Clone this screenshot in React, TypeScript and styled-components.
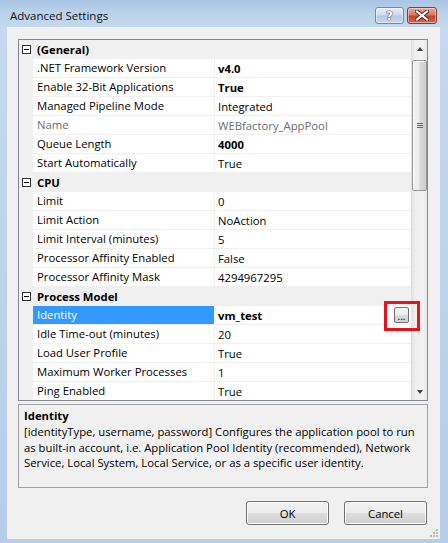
import React from "react";
import styled, { createGlobalStyle } from "styled-components";

const GlobalStyle = createGlobalStyle`
  html, body { margin: 0; padding: 0; }
  body {
    font-family: "Open Sans", "Noto Sans", sans-serif;
    font-size: 11.3px;
    color: #000;
  }
  * { box-sizing: border-box; }
`;

const Window = styled.div`
  width: 448px;
  height: 543px;
  display: flex;
  flex-direction: column;
  padding: 0 8px 4px 7px;
  background: linear-gradient(180deg, #a9c4e4 0px, #bad1eb 12px, #c4d9ef 27px, #bcd2eb 60%, #b6cde8 100%);
`;

const TitleBar = styled.div`
  height: 27px;
  flex: none;
  display: flex;
  align-items: flex-start;
  padding-left: 3px;
`;

const TitleText = styled.div`
  font-size: 11.5px;
  line-height: 16px;
  margin-top: 8px;
  color: #111;
`;

const Controls = styled.div`
  margin-left: auto;
  margin-right: 3px;
  margin-top: 7px;
  display: flex;
  gap: 3px;
`;

const CaptionButton = styled.div<{ $close?: boolean }>`
  width: ${(p) => (p.$close ? 30 : 29)}px;
  height: 17px;
  border-radius: 3px;
  border: 1px solid ${(p) => (p.$close ? "#8b3b2e" : "#6f89ad")};
  background: ${(p) =>
    p.$close
      ? "linear-gradient(180deg, #e9a897 0%, #d97966 45%, #c4432c 55%, #d06650 100%)"
      : "linear-gradient(180deg, #e6eef8 0%, #ccdcef 45%, #b4c9e4 55%, #c6d8ee 100%)"};
  box-shadow: inset 0 0 0 1px rgba(255, 255, 255, 0.45);
  display: flex;
  align-items: center;
  justify-content: center;
`;

const HelpGlyph = styled.span`
  font-family: "DejaVu Sans", sans-serif;
  font-weight: bold;
  font-size: 12px;
  line-height: 14px;
  color: #fff;
  text-shadow: 0 0 1px #2b4d7a, 0 0 1px #2b4d7a, 0 0 1px #2b4d7a;
`;

const Client = styled.div`
  flex: 1;
  position: relative;
  background: #f0f0f0;
  display: flex;
  flex-direction: column;
  padding: 12px 12px 0 11px;
`;

const Grid = styled.div`
  height: 362px;
  flex: none;
  border: 1px solid #828790;
  background: #fff;
  display: flex;
  overflow: hidden;
`;

const RowsArea = styled.div`
  width: 392px;
  flex: none;
  overflow: hidden;
  display: flex;
  flex-direction: column;
`;

const Row = styled.div`
  height: 19px;
  flex: none;
  display: flex;
  background: #f0f0f0;
`;

const Gutter = styled.div`
  width: 14px;
  flex: none;
  display: flex;
  align-items: center;
  justify-content: center;
`;

const Expander = styled.span`
  width: 9px;
  height: 9px;
  border: 1px solid #303030;
  background: #fff;
  display: flex;
  align-items: center;
  justify-content: center;
  &::after {
    content: "";
    width: 5px;
    height: 1px;
    background: #000;
  }
`;

const CategoryLabel = styled.div`
  font-weight: bold;
  padding-left: 4px;
  line-height: 19px;
`;

const NameCell = styled.div<{ $selected?: boolean; $disabled?: boolean }>`
  width: 182px;
  flex: none;
  padding-left: 4px;
  line-height: 18px;
  white-space: nowrap;
  background: ${(p) => (p.$selected ? "#3399ff" : "#fff")};
  color: ${(p) => (p.$selected ? "#fff" : p.$disabled ? "#6d6d6d" : "#000")};
  border-right: 1px solid #f0f0f0;
  border-bottom: 1px solid #f0f0f0;
`;

const ValueCell = styled.div<{ $bold?: boolean; $disabled?: boolean }>`
  flex: 1;
  display: flex;
  align-items: center;
  padding-left: 3px;
  padding-right: 2px;
  background: #fff;
  border-bottom: 1px solid #f0f0f0;
  white-space: nowrap;
  font-weight: ${(p) => (p.$bold ? "bold" : "normal")};
  color: ${(p) => (p.$disabled ? "#6d6d6d" : "#000")};
`;

const EllipsisButton = styled.div`
  margin-left: auto;
  width: 15px;
  height: 16px;
  border: 1px solid #707070;
  border-radius: 2px;
  background: linear-gradient(180deg, #f4f4f4 0%, #ececec 50%, #dedede 50%, #d2d2d2 100%);
  font-weight: normal;
  font-size: 10px;
  line-height: 16px;
  text-align: center;
  color: #000;
`;

const Annotation = styled.div`
  position: absolute;
  left: 377px;
  top: 274px;
  width: 36px;
  height: 30px;
  border: 3px solid #e3141b;
  pointer-events: none;
`;

const Scrollbar = styled.div`
  width: 16px;
  flex: none;
  border-left: 1px solid #e0e0e0;
  background: linear-gradient(90deg, #e4e4e4 0%, #f0f0f0 25%, #f2f2f2 75%, #e6e6e6 100%);
  display: flex;
  flex-direction: column;
`;

const ArrowBox = styled.div`
  height: 17px;
  flex: none;
  display: flex;
  align-items: center;
  justify-content: center;
`;

const Arrow = styled.span<{ $down?: boolean }>`
  width: 0;
  height: 0;
  border-left: 3.5px solid transparent;
  border-right: 3.5px solid transparent;
  ${(p) =>
    p.$down ? "border-top: 4px solid #444;" : "border-bottom: 4px solid #444;"}
`;

const Track = styled.div`
  flex: 1;
  padding-top: 3px;
`;

const Thumb = styled.div`
  height: 131px;
  border: 1px solid #979797;
  border-radius: 2px;
  background: linear-gradient(90deg, #f2f2f2 0%, #ebebeb 45%, #d9d9d9 55%, #cfcfcf 100%);
  box-shadow: inset 1px 1px 0 #fdfdfd;
  display: flex;
  align-items: center;
  justify-content: center;
`;

const Grip = styled.span`
  width: 6px;
  height: 5px;
  background: repeating-linear-gradient(180deg, #666 0px, #666 1px, transparent 1px, transparent 2px);
`;

const Description = styled.div`
  margin-top: 3px;
  height: 84px;
  flex: none;
  border: 1px solid #a0a0a0;
  background: #f0f0f0;
  padding: 2px 5px;
`;

const DescTitle = styled.div`
  font-weight: bold;
  line-height: 17px;
`;

const DescText = styled.div`
  line-height: 15.5px;
`;

const ButtonRow = styled.div`
  margin-top: 13px;
  display: flex;
  justify-content: flex-end;
  gap: 15px;
  padding-right: 1px;
`;

const DialogButton = styled.button`
  width: 83px;
  height: 24px;
  border: 1px solid #707070;
  border-radius: 3px;
  background: linear-gradient(180deg, #f2f2f2 0%, #ebebeb 50%, #dddddd 50%, #cfcfcf 100%);
  box-shadow: inset 0 0 0 1px #fcfcfc;
  font-family: "Open Sans", "Noto Sans", sans-serif;
  font-size: 11.3px;
  color: #000;
  padding: 0;
`;

const ResizeGrip = styled.svg`
  position: absolute;
  right: 1px;
  bottom: 1px;
`;

type Prop = {
  name: string;
  value: string;
  bold?: boolean;
  disabled?: boolean;
  selected?: boolean;
  button?: boolean;
};

type Category = { title: string; props: Prop[] };

const data: Category[] = [
  {
    title: "(General)",
    props: [
      { name: ".NET Framework Version", value: "v4.0", bold: true },
      { name: "Enable 32-Bit Applications", value: "True", bold: true },
      { name: "Managed Pipeline Mode", value: "Integrated" },
      { name: "Name", value: "WEBfactory_AppPool", disabled: true },
      { name: "Queue Length", value: "4000", bold: true },
      { name: "Start Automatically", value: "True" },
    ],
  },
  {
    title: "CPU",
    props: [
      { name: "Limit", value: "0" },
      { name: "Limit Action", value: "NoAction" },
      { name: "Limit Interval (minutes)", value: "5" },
      { name: "Processor Affinity Enabled", value: "False" },
      { name: "Processor Affinity Mask", value: "4294967295" },
    ],
  },
  {
    title: "Process Model",
    props: [
      { name: "Identity", value: "vm_test", bold: true, selected: true, button: true },
      { name: "Idle Time-out (minutes)", value: "20" },
      { name: "Load User Profile", value: "True" },
      { name: "Maximum Worker Processes", value: "1" },
      { name: "Ping Enabled", value: "True" },
    ],
  },
];

export default function App() {
  return (
    <>
      <GlobalStyle />
      <Window>
        <TitleBar>
          <TitleText>Advanced Settings</TitleText>
          <Controls>
            <CaptionButton>
              <HelpGlyph>?</HelpGlyph>
            </CaptionButton>
            <CaptionButton $close>
              <svg width="14" height="11" viewBox="0 0 14 11">
                <path d="M2 1.5 L12 9.5 M12 1.5 L2 9.5" stroke="#5a2018" strokeWidth="4" strokeLinecap="square" />
                <path d="M2 1.5 L12 9.5 M12 1.5 L2 9.5" stroke="#fff" strokeWidth="2.2" strokeLinecap="square" />
              </svg>
            </CaptionButton>
          </Controls>
        </TitleBar>
        <Client>
          <Grid>
            <RowsArea>
              {data.map((cat) => (
                <React.Fragment key={cat.title}>
                  <Row>
                    <Gutter>
                      <Expander />
                    </Gutter>
                    <CategoryLabel>{cat.title}</CategoryLabel>
                  </Row>
                  {cat.props.map((p) => (
                    <Row key={p.name}>
                      <Gutter />
                      <NameCell $selected={p.selected} $disabled={p.disabled}>
                        {p.name}
                      </NameCell>
                      <ValueCell $bold={p.bold} $disabled={p.disabled}>
                        {p.value}
                        {p.button && <EllipsisButton>...</EllipsisButton>}
                      </ValueCell>
                    </Row>
                  ))}
                </React.Fragment>
              ))}
            </RowsArea>
            <Scrollbar>
              <ArrowBox>
                <Arrow />
              </ArrowBox>
              <Track>
                <Thumb>
                  <Grip />
                </Thumb>
              </Track>
              <ArrowBox>
                <Arrow $down />
              </ArrowBox>
            </Scrollbar>
          </Grid>
          <Description>
            <DescTitle>Identity</DescTitle>
            <DescText>
              [identityType, username, password] Configures the application pool to run as
              built-in account, i.e. Application Pool Identity (recommended), Network Service,
              Local System, Local Service, or as a specific user identity.
            </DescText>
          </Description>
          <ButtonRow>
            <DialogButton>OK</DialogButton>
            <DialogButton>Cancel</DialogButton>
          </ButtonRow>
          <Annotation />
          <ResizeGrip width="10" height="10" viewBox="0 0 10 10">
            <rect x="7" y="1" width="2" height="2" fill="#b8b8b8" />
            <rect x="4" y="4" width="2" height="2" fill="#b8b8b8" />
            <rect x="7" y="4" width="2" height="2" fill="#b8b8b8" />
            <rect x="1" y="7" width="2" height="2" fill="#b8b8b8" />
            <rect x="4" y="7" width="2" height="2" fill="#b8b8b8" />
            <rect x="7" y="7" width="2" height="2" fill="#b8b8b8" />
          </ResizeGrip>
        </Client>
      </Window>
    </>
  );
}
